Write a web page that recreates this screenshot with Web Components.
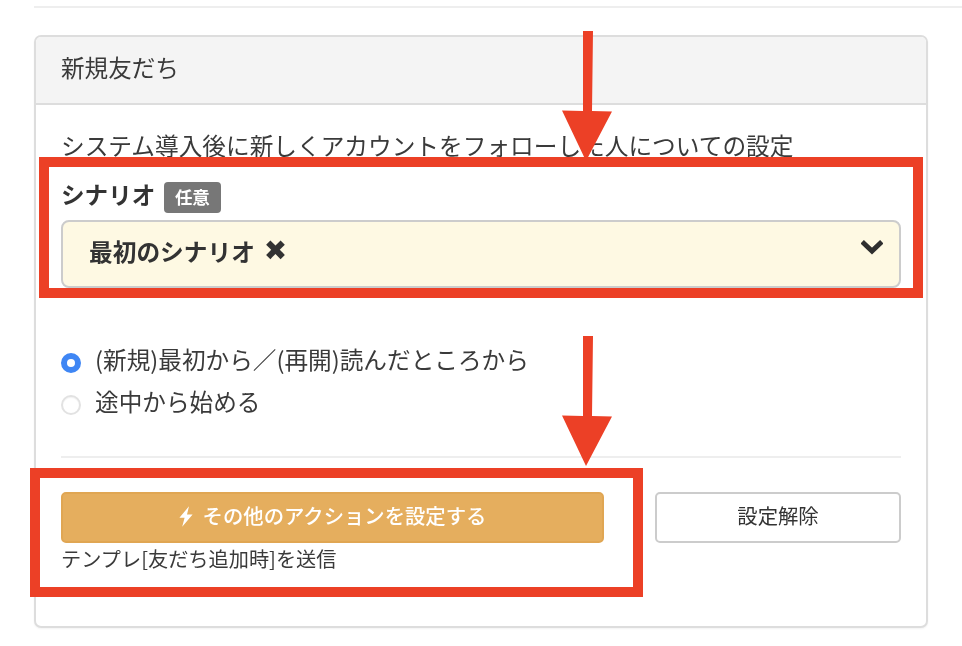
<!DOCTYPE html>
<html lang="ja">
<head>
<meta charset="utf-8">
<title>新規友だち</title>
<style>
html,body{margin:0;padding:0;height:646px;overflow:hidden;background:#fff}
body{font-family:"Noto Sans CJK JP","Liberation Sans",sans-serif;color:#333;position:relative}
</style>
</head>
<body>
<app-page>
  <settings-panel heading="新規友だち">
    <p-text>システム導入後に新しくアカウントをフォローした人についての設定</p-text>
    <field-label badge="任意">シナリオ</field-label>
    <tag-select>最初のシナリオ</tag-select>
    <radio-row checked style="margin-top:53px">(新規)最初から／(再開)読んだところから</radio-row>
    <radio-row style="margin-top:6px">途中から始める</radio-row>
    <rule-line></rule-line>
    <action-row>
      <action-button variant="primary" bolt>その他のアクションを設定する</action-button>
      <span slot="note">テンプレ[友だち追加時]を送信</span>
      <action-button slot="side">設定解除</action-button>
    </action-row>
  </settings-panel>
</app-page>
<mark-box style="left:39px;top:157px;width:884px;height:141px"></mark-box>
<mark-box style="left:30px;top:468px;width:613px;height:129px"></mark-box>
<mark-arrow style="left:561px;top:31px"></mark-arrow>
<mark-arrow style="left:561px;top:336px"></mark-arrow>
<script>
function def(name, html, init){
  customElements.define(name, class extends HTMLElement{
    constructor(){super();this.attachShadow({mode:'open'}).innerHTML=html;}
    connectedCallback(){ if(init) init(this,this.shadowRoot); }
  });
}
def('app-page',`<style>
:host{display:block;padding:6px 0 0 34px;filter:blur(.3px)}
.top{height:2px;background:#eee}
.wrap{margin-top:27px;width:894px}
</style><div class="top"></div><div class="wrap"><slot></slot></div>`);

def('settings-panel',`<style>
:host{display:block;box-sizing:border-box;height:593px;border:2px solid #ddd;border-radius:7px;box-shadow:0 1px 2px rgba(0,0,0,.05);overflow:hidden;background:#fff}
.head{height:66px;box-sizing:content-box;background:#f4f4f4;border-bottom:2px solid #ddd;display:flex;align-items:center;padding-left:25px;font-size:23.6px;color:#3a3a3a}
.head span{position:relative;top:-3px}
.body{padding:23px 25px 0}
</style><div class="head"><span id="h"></span></div><div class="body"><slot></slot></div>`,
(el,r)=>{r.getElementById('h').textContent=el.getAttribute('heading')});

def('p-text',`<style>
:host{display:block;font-size:23.68px;line-height:34px;color:#3a3a3a;white-space:nowrap}
</style><slot></slot>`);

def('field-label',`<style>
:host{display:flex;align-items:center;margin-top:20px;height:31px}
.t{font-size:23.6px;font-weight:700;color:#333;line-height:31px;position:relative;top:-3px}
.b{margin-left:9px;width:57px;height:31px;box-sizing:border-box;padding:0 1px 2px 0;background:#777;border-radius:4px;color:#fff;font-size:17.5px;font-weight:700;display:flex;align-items:center;justify-content:center}
</style><span class="t"><slot></slot></span><span class="b" id="b"></span>`,
(el,r)=>{r.getElementById('b').textContent=el.getAttribute('badge')});

def('tag-select',`<style>
:host{display:flex;align-items:center;justify-content:space-between;box-sizing:border-box;height:68px;margin-top:7px;background:#fef9e3;border:2px solid #ccc;border-radius:8px;padding:0 16px 0 26px}
.t{font-size:23.7px;font-weight:700;color:#333;display:flex;align-items:center;position:relative;top:-3px}
.x{margin-left:9px;font-family:"DejaVu Sans",sans-serif;font-size:28px;line-height:1}
svg{display:block;position:relative;top:-7px}
</style><span class="t"><slot></slot><span class="x">✖</span></span>
<svg width="22" height="15" viewBox="0 0 22 15"><path d="M3 3.5 11 11l8-7.5" fill="none" stroke="#2f2f2f" stroke-width="5" stroke-linecap="square"/></svg>`);

def('radio-row',`<style>
:host{display:flex;align-items:center;height:36px;font-size:23.65px;color:#3a3a3a;white-space:nowrap}
.r{box-sizing:border-box;width:20px;height:20px;border-radius:50%;margin-right:14px;flex:none;background:#fff;border:2px solid #e2e2e2;position:relative;top:4px;box-shadow:inset 0 1px 1px rgba(0,0,0,.05)}
:host([checked]) .r{border:6px solid #3f86f4;box-shadow:none}
</style><span class="r"></span><span><slot></slot></span>`);

def('rule-line',`<style>:host{display:block;height:2px;background:#eee;margin-top:37px}</style>`);

def('action-row',`<style>
:host{display:flex;gap:51px;margin-top:34px;align-items:flex-start}
.l{width:543px;flex:none}
.n{font-size:20.2px;line-height:30px;margin-top:1px;color:#3a3a3a;white-space:nowrap}
.s{flex:1}
</style><div class="l"><slot></slot><div class="n"><slot name="note"></slot></div></div><div class="s"><slot name="side"></slot></div>`);

def('action-button',`<style>
:host{display:flex;align-items:center;justify-content:center;box-sizing:border-box;height:51px;border-radius:5px;border:2px solid #ccc;background:#fff;color:#333;font-size:20.35px}
:host([variant=primary]){background:#e5ae5e;border-color:#e0a653;color:#fff;font-weight:500}
svg{display:none;margin-right:10px}
:host([bolt]) svg{display:block;position:relative;top:-1px}
span{position:relative;top:-3px}
</style><svg width="14" height="21" viewBox="0 0 14 21"><path d="M10 .3 .4 11.8h5.2L3.2 20.8 13.6 8.4H8L10 .3Z" fill="#fff"/></svg><span><slot></slot></span>`);

def('mark-box',`<style>:host{position:absolute;box-sizing:border-box;border:10px solid #ec4026;display:block}</style>`);

def('mark-arrow',`<style>:host{position:absolute;display:block;width:52px;height:132px}svg{display:block}</style>
<svg width="52" height="132" viewBox="0 0 52 132"><path d="M22 0h10l-1 80 20 .5L25 130 1 79.5l21 .5Z" fill="#ec4026"/></svg>`);
</script>
</body>
</html>
